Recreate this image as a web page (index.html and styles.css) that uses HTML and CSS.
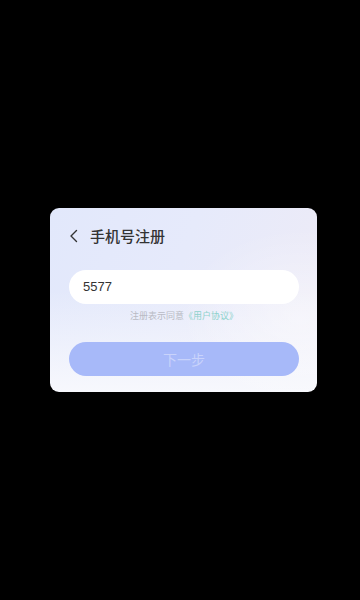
FILE: index.html
```html
<!DOCTYPE html>
<html lang="zh-CN">
<head>
    <meta charset="UTF-8">
    <meta name="viewport" content="width=device-width, initial-scale=1.0">
    <title>手机号注册</title>
    <link rel="stylesheet" href="styles.css">
</head>
<body>
    <div class="dialog">
        <div class="header">
            <svg class="back" width="10" height="14" viewBox="0 0 10 14">
                <path d="M7.5 1.5 L2 7 L7.5 12.5" fill="none" stroke="#333" stroke-width="1.4" stroke-linecap="round" stroke-linejoin="round"/>
            </svg>
            <span class="title">手机号注册</span>
        </div>
        <div class="phone">5577</div>
        <div class="agree">注册表示同意<span class="link">《用户协议》</span></div>
        <button class="next">下一步</button>
    </div>
</body>
</html>
```

FILE: styles.css
```css
body {
    margin: 0;
    height: 600px;
    background-color: #000;
    display: flex;
    align-items: center;
    font-family: "Noto Sans CJK SC", "Liberation Sans", sans-serif;
    color: #333;
}

.dialog {
    margin-left: 50px;
    width: 267px;
    height: 184px;
    box-sizing: border-box;
    padding: 18px 18px 16px 19px;
    border-radius: 9px;
    background:
        radial-gradient(ellipse 120px 90px at 250px 110px, rgba(255,255,255,0.45), rgba(255,255,255,0)),
        linear-gradient(180deg, rgba(248,249,254,0) 45%, #f7f8fd 100%),
        linear-gradient(110deg, #e2e8fb 0%, #e6eafb 45%, #eeebf6 100%);
    display: flex;
    flex-direction: column;
}

.header {
    display: flex;
    align-items: center;
    height: 20px;
}

.back {
    margin-right: 11px;
}

.title {
    font-size: 15px;
    font-weight: 500;
    line-height: 20px;
    color: #333;
}

.phone {
    margin-top: 24px;
    height: 34px;
    border-radius: 17px;
    background-color: #fff;
    padding-left: 14px;
    font-family: "Liberation Sans", sans-serif;
    font-size: 13px;
    line-height: 34px;
    color: #333;
}

.agree {
    margin-top: 6px;
    text-align: center;
    font-size: 9px;
    line-height: 12px;
    color: #b9bbc4;
}

.agree .link {
    color: #8ed2cc;
}

.next {
    margin-top: 20px;
    height: 34px;
    border: none;
    border-radius: 17px;
    background-color: #a7b9f9;
    color: #c9d3fb;
    font-family: inherit;
    font-size: 14px;
    padding: 0;
}
```
